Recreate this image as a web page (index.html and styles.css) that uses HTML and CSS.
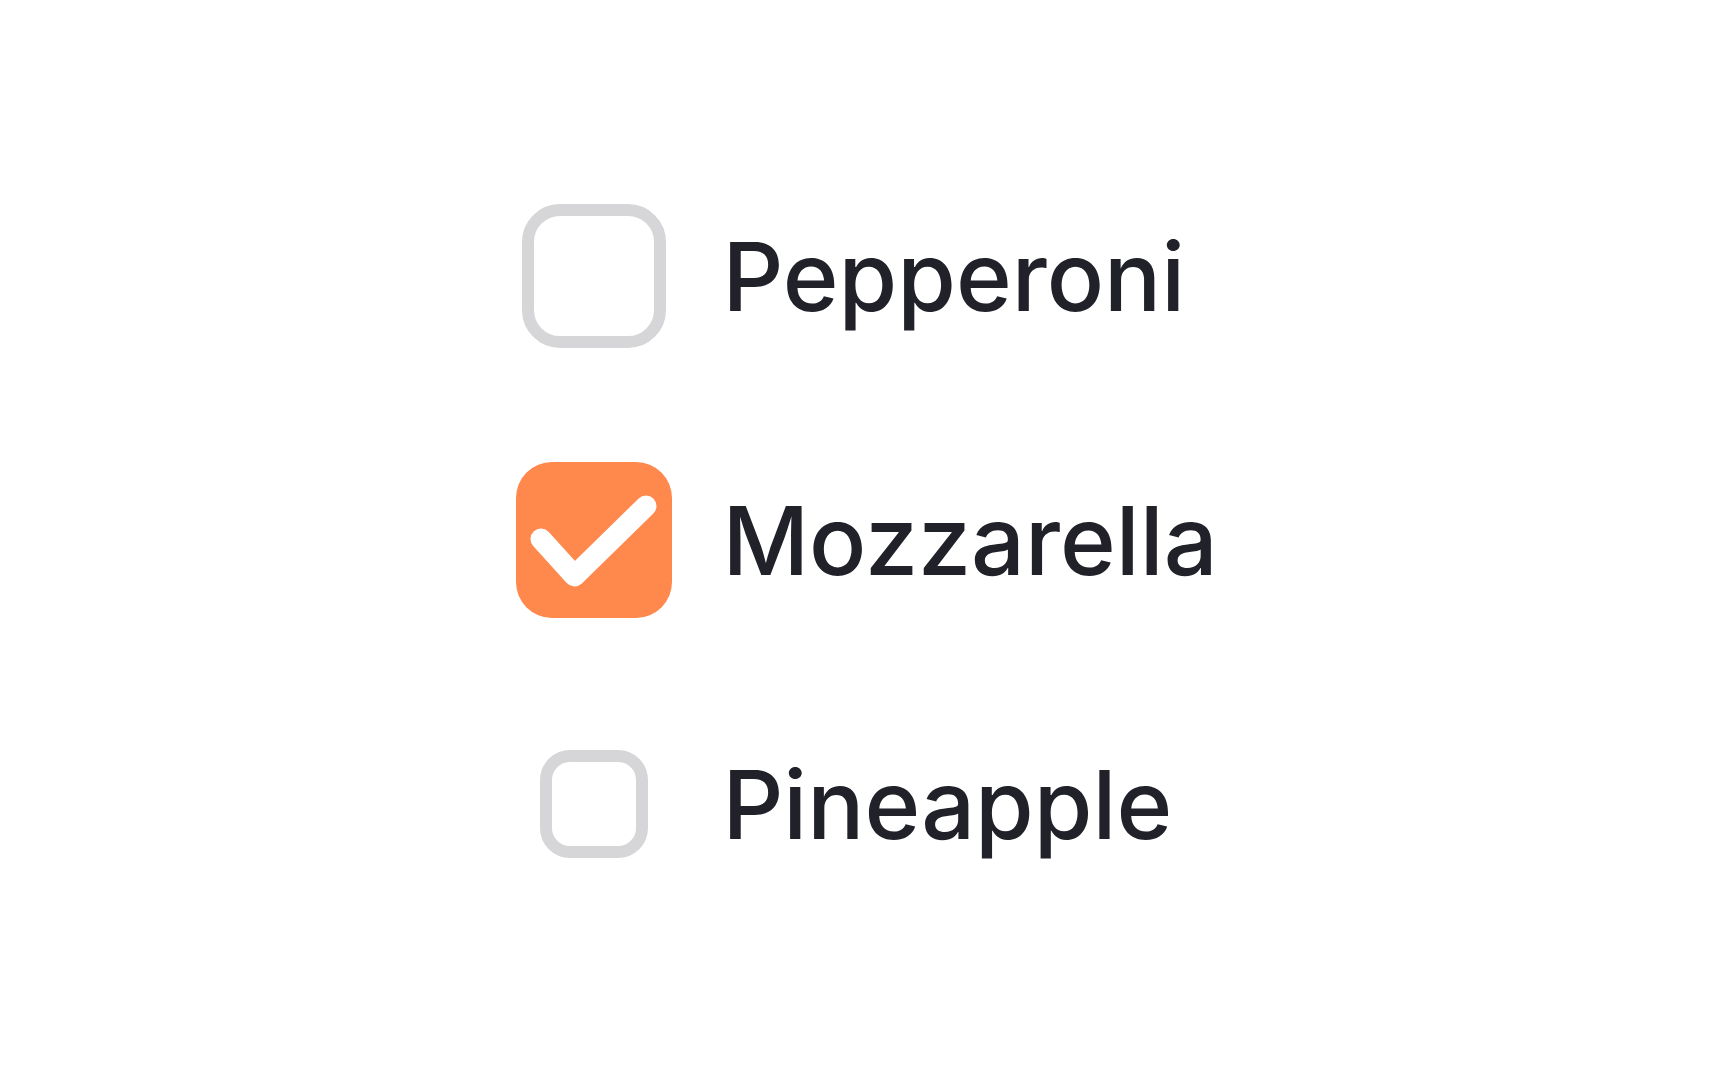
FILE: index.html
```html
<!DOCTYPE html>
<html lang="en">
<head>
<meta charset="utf-8">
<title>Toppings</title>
<link rel="stylesheet" href="styles.css">
</head>
<body>
<main class="page">
  <ul class="list">
    <li class="item">
      <span class="box-cell"><span class="box box-md"></span></span>
      <span class="label">Pepperoni</span>
    </li>
    <li class="item">
      <span class="box-cell">
        <span class="box box-lg checked">
          <svg class="check" viewBox="0 0 156 156" aria-hidden="true">
            <path d="M25 77 L58.5 114 L130 44" fill="none" stroke="#fff" stroke-width="21" stroke-linecap="round" stroke-linejoin="round"/>
          </svg>
        </span>
      </span>
      <span class="label">Mozzarella</span>
    </li>
    <li class="item">
      <span class="box-cell"><span class="box box-sm"></span></span>
      <span class="label">Pineapple</span>
    </li>
  </ul>
</main>
</body>
</html>
```
FILE: styles.css
```css
html, body {
  margin: 0;
  padding: 0;
  background: #ffffff;
}
.page {
  width: 1728px;
  height: 1080px;
  display: flex;
  align-items: center;
  justify-content: center;
}
.list {
  list-style: none;
  margin: 0;
  padding: 0 0 0 6px;
  display: grid;
  grid-auto-rows: 264px;
}
.item {
  display: flex;
  align-items: center;
  gap: 50px;
}
.box-cell {
  width: 156px;
  display: flex;
  justify-content: center;
  align-items: center;
}
.box {
  box-sizing: border-box;
  display: block;
  border: 12px solid #d6d6d9;
  background: #fff;
}
.box-md {
  width: 144px;
  height: 144px;
  border-radius: 38px;
}
.box-lg {
  width: 156px;
  height: 156px;
  border-radius: 36px;
}
.box-sm {
  width: 108px;
  height: 108px;
  border-radius: 30px;
}
.checked {
  border: none;
  background: #ff884d;
}
.check {
  display: block;
  width: 156px;
  height: 156px;
}
.label {
  font-family: Inter, "Noto Sans", sans-serif;
  font-size: 95px;
  font-weight: 500;
  color: #202129;
  line-height: 1.2;
  padding-top: 2px;
}
```
